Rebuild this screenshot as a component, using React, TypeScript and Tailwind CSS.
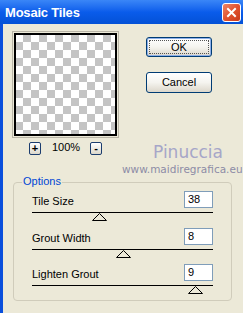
import React from 'react';

const rows = [
  { label: 'Tile Size', value: '38', thumb: 60 },
  { label: 'Grout Width', value: '8', thumb: 84 },
  { label: 'Lighten Grout', value: '9', thumb: 156 },
];

const Thumb = () => (
  <svg width="15" height="8" viewBox="0 0 15 8">
    <polygon points="0.5,7.5 7.5,0.5 14.5,7.5" fill="#ece9d8" stroke="#000" strokeWidth="1" />
  </svg>
);

const ZoomButton = ({ sign }: { sign: string }) => (
  <div className="w-[12px] h-[13px] rounded-[2px] border border-[#1c3d6e] bg-gradient-to-b from-white to-[#dcd8cc] flex items-center justify-center text-[11px] leading-none font-bold text-black">
    {sign}
  </div>
);

export default function App() {
  return (
    <div className="w-[243px] h-[313px] overflow-hidden flex flex-col bg-[#ece9d8] font-['Liberation_Sans',Arial,sans-serif] text-[11px] text-black">
      {/* title bar */}
      <div className="h-[24px] flex items-center justify-between pl-[5px] pr-[2px] bg-gradient-to-b from-[#3a86f7] via-[#0a5ceb] to-[#0451d6]">
        <span className="text-white font-bold text-[13px] leading-none tracking-[-0.2px]">Mosaic Tiles</span>
        <div className="w-[19px] h-[19px] rounded-[3px] border border-white bg-gradient-to-br from-[#ec8466] via-[#e1532f] to-[#c9391a] flex items-center justify-center">
          <svg width="11" height="11" viewBox="0 0 11 11">
            <path d="M2 2 L9 9 M9 2 L2 9" stroke="#fff" strokeWidth="2" strokeLinecap="square" />
          </svg>
        </div>
      </div>

      {/* body */}
      <div className="relative flex-1 flex flex-col border-l-[3px] border-[#0a4fdc]">
        <div className="flex items-start">
          <div className="ml-[9px] mt-[7px] flex flex-col">
            <div className="w-[107px] h-[107px] border border-[#b8b4a6] p-px">
              <div className="w-full h-full border-2 border-black bg-[repeating-conic-gradient(#c4c4c4_0_25%,#ffffff_0_50%)] bg-[length:16px_16px] bg-[position:-1px_-1px]" />
            </div>
            <div className="mt-[4px] flex items-center">
              <div className="ml-[17px]">
                <ZoomButton sign="+" />
              </div>
              <span className="ml-[11px] leading-none -mt-[3px]">100%</span>
              <div className="ml-[10px]">
                <ZoomButton sign="-" />
              </div>
            </div>
          </div>

          <div className="ml-[27px] mt-[13px] flex flex-col">
            <div className="w-[66px] h-[20px] rounded-[3px] border border-[#003c74] bg-gradient-to-b from-white via-[#f5f4ef] to-[#dcd7cb] shadow-[inset_0_0_0_1px_#8eb0ea] p-[2px]">
              <div className="w-full h-full border border-dotted border-[#555] flex items-center justify-center">OK</div>
            </div>
            <div className="mt-[15px] w-[66px] h-[21px] rounded-[3px] border border-[#003c74] bg-gradient-to-b from-white via-[#f5f4ef] to-[#dcd7cb] flex items-center justify-center">
              Cancel
            </div>
          </div>
        </div>

        {/* watermark */}
        <div className="absolute left-[150px] top-[120px] font-['DejaVu_Sans',sans-serif] text-[17px] leading-none text-[#a6a6c8]">Pinuccia</div>
        <div className="absolute left-[119px] top-[140px] font-['DejaVu_Sans',sans-serif] text-[10.5px] leading-none text-[#8c8ca6] whitespace-nowrap">www.maidiregrafica.eu</div>

        {/* options group */}
        <div className="relative ml-[10px] mt-[27px] w-[219px] h-[119px] rounded-[4px] border border-[#d0ccbb]">
          <span className="absolute left-[8px] -top-[7px] px-px bg-[#ece9d8] text-[#0046d5] leading-none">Options</span>
          <div className="pl-[18px] pt-[8px] flex flex-col">
            {rows.map((r, i) => (
              <div key={r.label} className={`w-[181px] flex flex-col ${i === 1 ? 'mt-[7px]' : i === 2 ? 'mt-[6px]' : ''}`}>
                <div className="h-[17px] flex items-center justify-between">
                  <span className="mt-[3px]">{r.label}</span>
                  <div className="w-[29px] h-[17px] border border-[#7f9db9] bg-white pl-[3px] flex items-center">{r.value}</div>
                </div>
                <div className="mt-[4px] h-px bg-black" />
                <div className="relative h-[8px]">
                  <div className="absolute top-0" style={{ left: r.thumb }}>
                    <Thumb />
                  </div>
                </div>
              </div>
            ))}
          </div>
        </div>
      </div>
    </div>
  );
}
